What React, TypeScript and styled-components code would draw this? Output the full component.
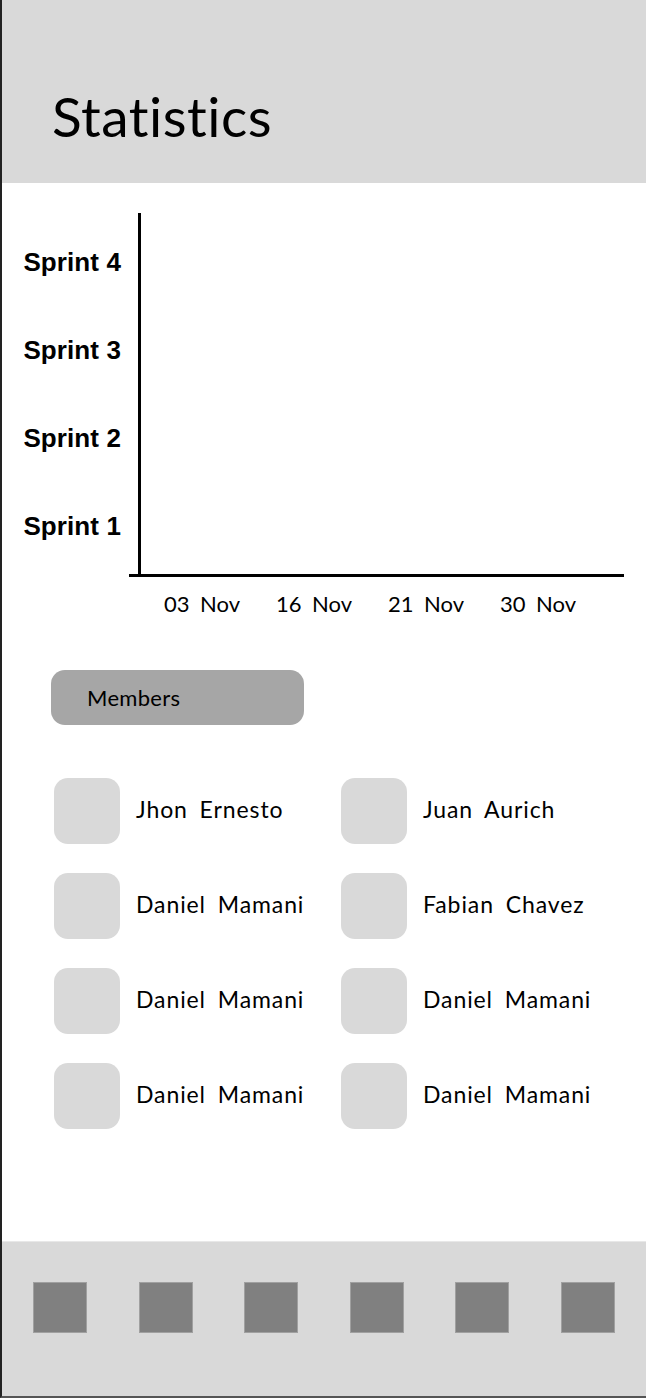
import styled, { createGlobalStyle } from "styled-components";

const GlobalStyle = createGlobalStyle`
  html, body {
    margin: 0;
    padding: 0;
    background: #fff;
  }
  * {
    box-sizing: border-box;
  }
`;

const sprints = ["Sprint 4", "Sprint 3", "Sprint 2", "Sprint 1"];
const dates = ["03 Nov", "16 Nov", "21 Nov", "30 Nov"];
const members = [
  "Jhon Ernesto",
  "Juan Aurich",
  "Daniel Mamani",
  "Fabian Chavez",
  "Daniel Mamani",
  "Daniel Mamani",
  "Daniel Mamani",
  "Daniel Mamani",
];

const App = () => {
  return (
    <>
      <GlobalStyle />
      <StyledScreen>
        <StyledHeader>
          <StyledTitle>Statistics</StyledTitle>
        </StyledHeader>

        <StyledChart>
          <StyledYLabels>
            {sprints.map((s) => (
              <StyledYLabel key={s}>{s}</StyledYLabel>
            ))}
          </StyledYLabels>
          <StyledPlotColumn>
            <StyledPlot />
            <StyledXAxis />
            <StyledXLabels>
              {dates.map((d) => (
                <StyledXLabel key={d}>{d}</StyledXLabel>
              ))}
            </StyledXLabels>
          </StyledPlotColumn>
        </StyledChart>

        <StyledMembersTag>Members</StyledMembersTag>

        <StyledMemberGrid>
          {members.map((name, i) => (
            <StyledMember key={i}>
              <StyledAvatar />
              <StyledName>{name}</StyledName>
            </StyledMember>
          ))}
        </StyledMemberGrid>

        <StyledFooter>
          {Array.from({ length: 6 }).map((_, i) => (
            <StyledNavItem key={i} />
          ))}
        </StyledFooter>
      </StyledScreen>
    </>
  );
};

export default App;

const StyledScreen = styled.div`
  width: 646px;
  height: 1398px;
  display: flex;
  flex-direction: column;
  border-left: 2px solid #222;
  border-bottom: 2px solid #555;
  background: #fff;
  font-family: Lato, "Noto Sans", sans-serif;
  color: #000;
  overflow: hidden;
`;

const StyledHeader = styled.header`
  height: 183px;
  background: #d9d9d9;
  display: flex;
  align-items: flex-end;
  padding: 0 0 39px 50px;
`;

const StyledTitle = styled.h1`
  margin: 0;
  font-size: 55px;
  font-weight: 400;
  line-height: 1;
  letter-spacing: 0.5px;
`;

const StyledChart = styled.section`
  display: grid;
  grid-template-columns: 119px 1fr;
  column-gap: 17px;
  padding: 30px 22px 0 0;
`;

const StyledYLabels = styled.div`
  display: flex;
  flex-direction: column;
  padding-top: 5px;
`;

const StyledYLabel = styled.div`
  height: 88px;
  display: flex;
  align-items: center;
  justify-content: flex-end;
  font-family: "Liberation Sans", Arial, sans-serif;
  font-weight: 700;
  font-size: 26px;
  letter-spacing: 0.1px;
`;

const StyledPlotColumn = styled.div`
  display: flex;
  flex-direction: column;
`;

const StyledPlot = styled.div`
  height: 361px;
  border-left: 3px solid #000;
`;

const StyledXAxis = styled.div`
  height: 3px;
  margin-left: -9px;
  background: #000;
`;

const StyledXLabels = styled.div`
  display: flex;
  padding: 13px 0 0 8px;
`;

const StyledXLabel = styled.div`
  width: 112px;
  text-align: center;
  font-size: 22px;
  line-height: 28px;
  word-spacing: 5px;
`;

const StyledMembersTag = styled.div`
  width: 253px;
  height: 55px;
  margin: 52px 0 0 49px;
  padding-left: 36px;
  display: flex;
  align-items: center;
  background: #a6a6a6;
  border-radius: 14px;
  font-size: 22px;
  letter-spacing: 0.3px;
`;

const StyledMemberGrid = styled.div`
  display: grid;
  grid-template-columns: 287px 1fr;
  row-gap: 29px;
  margin: 53px 0 0 52px;
`;

const StyledMember = styled.div`
  display: flex;
  align-items: center;
  gap: 16px;
`;

const StyledAvatar = styled.div`
  width: 66px;
  height: 66px;
  flex-shrink: 0;
  background: #d9d9d9;
  border-radius: 14px;
`;

const StyledName = styled.span`
  font-size: 23px;
  line-height: 28px;
  margin-top: -4px;
  word-spacing: 5px;
  letter-spacing: 0.9px;
`;

const StyledFooter = styled.footer`
  margin-top: auto;
  height: 155px;
  background: #d9d9d9;
  border-top: 1px solid #e8e8e8;
  display: flex;
  justify-content: space-between;
  align-items: flex-start;
  padding: 40px 31px 0 31px;
`;

const StyledNavItem = styled.div`
  width: 54px;
  height: 51px;
  background: #808080;
  border: 1px solid #a0a0a0;
`;
